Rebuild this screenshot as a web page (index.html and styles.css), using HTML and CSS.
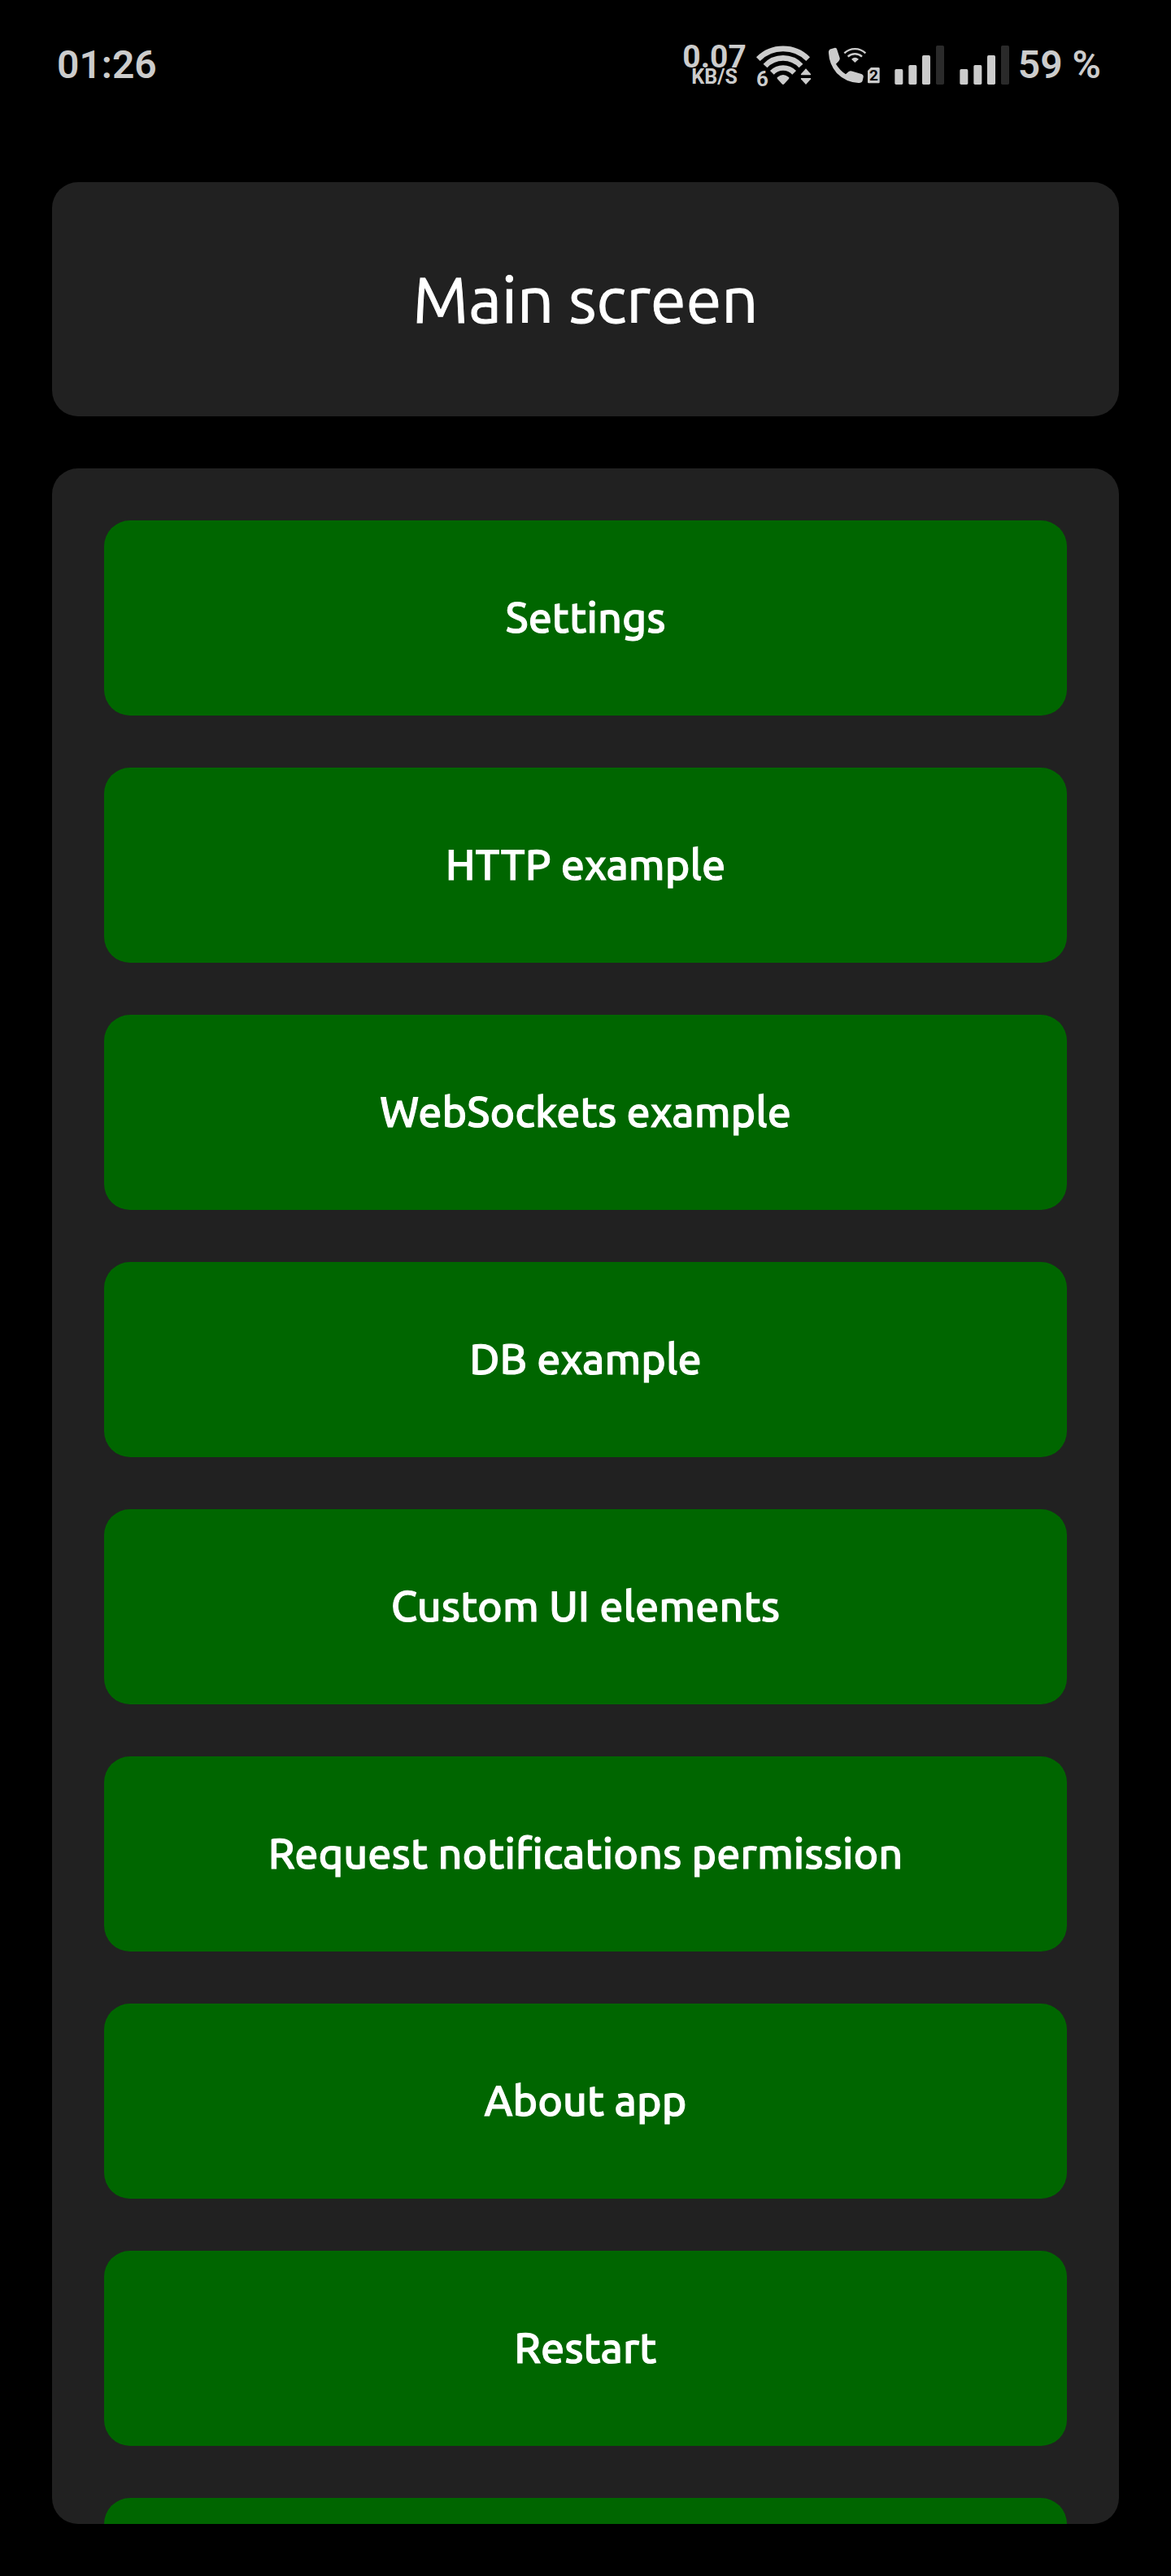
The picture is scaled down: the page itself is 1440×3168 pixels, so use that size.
FILE: index.html
```html
<!DOCTYPE html>
<html lang="en">
<head>
<meta charset="utf-8">
<meta name="viewport" content="width=device-width, initial-scale=1">
<title>Main screen</title>
<link rel="stylesheet" href="styles.css">
</head>
<body>
<div class="app">
  <div class="status-bar">
    <time class="status-text">01:26</time>
    <div class="status-icons">
      <div class="speed">
        <span class="speed-value">0.07</span>
        <span class="speed-unit">KB/S</span>
      </div>
      <svg class="icon icon-wifi" viewBox="321 66 240 168" role="img" aria-label="Wi-Fi 6">
        <g fill="none" stroke="currentColor" stroke-width="20">
          <path d="M340 128A130 130 0 0 1 524 128"/>
          <path d="M366 153A90 90 0 0 1 498 153"/>
          <path d="M391 178A57 57 0 0 1 473 178"/>
        </g>
        <path d="M411 201Q407 197 412 194Q432 178 452 194Q457 197 453 201L436 220Q432 224 428 220Z"/>
        <path d="M516 163L534 183Q536 187 532 187H500Q496 187 498 183Z"/>
        <path d="M516 222L534 202Q536 198 532 198H500Q496 198 498 202Z"/>
        <text x="333" y="227" font-size="78">6</text>
      </svg>
      <svg class="icon icon-call" viewBox="585 66 210 168" role="img" aria-label="Wi-Fi calling, SIM 2">
        <path d="M600 106Q598 92 611 90L621 87Q629 85 631 93L641 124Q643 131 637 136L627 146Q640 168 663 184L674 174Q680 170 688 173L721 183Q730 187 728 195L725 208Q722 217 710 216Q664 214 630 180Q602 148 600 106Z"/>
        <g fill="none" stroke="currentColor" stroke-width="7">
          <path d="M658 106A56 56 0 0 1 736 106"/>
          <path d="M671 119A38 38 0 0 1 723 119"/>
        </g>
        <path d="M684 128Q697 117 711 128L697 141Z"/>
        <path d="M756 159H784Q788 159 788 163V213Q788 217 784 217H748Q744 217 744 213V171Z"/>
        <text class="sim-number" x="766" y="208" font-size="57" text-anchor="middle">2</text>
      </svg>
      <svg class="icon icon-signal" viewBox="39 66 216 168" role="img" aria-label="SIM 1 signal">
        <rect x="64" y="165" width="30" height="57" rx="5"/>
        <rect x="115" y="150" width="30" height="72" rx="5"/>
        <rect x="165" y="114" width="30" height="108" rx="5"/>
        <rect class="signal-off" x="216" y="78" width="30" height="144" rx="5"/>
      </svg>
      <svg class="icon icon-signal" viewBox="39 66 216 168" role="img" aria-label="SIM 2 signal">
        <rect x="64" y="165" width="30" height="57" rx="5"/>
        <rect x="115" y="150" width="30" height="72" rx="5"/>
        <rect x="165" y="114" width="30" height="108" rx="5"/>
        <rect class="signal-off" x="216" y="78" width="30" height="144" rx="5"/>
      </svg>
      <span class="status-text">59 %</span>
    </div>
  </div>
  <header class="card title-card">
    <h1 class="title">Main screen</h1>
  </header>
  <main class="card menu">
    <button class="menu-button" type="button">Settings</button>
    <button class="menu-button" type="button">HTTP example</button>
    <button class="menu-button" type="button">WebSockets example</button>
    <button class="menu-button" type="button">DB example</button>
    <button class="menu-button" type="button">Custom UI elements</button>
    <button class="menu-button" type="button">Request notifications permission</button>
    <button class="menu-button" type="button">About app</button>
    <button class="menu-button" type="button">Restart</button>
    <button class="menu-button" type="button" aria-label="Exit"></button>
  </main>
</div>
</body>
</html>
```
FILE: styles.css
```css
* {
  box-sizing: border-box;
}

body {
  margin: 0;
  background: #000;
  color: #fff;
  font-family: Ubuntu, "Noto Sans", sans-serif;
}

.app {
  display: flex;
  flex-direction: column;
  gap: 64px;
  height: 100vh;
  padding: 0 64px 64px;
}

.status-bar {
  display: flex;
  flex: none;
  align-items: center;
  justify-content: space-between;
  height: 160px;
  padding: 0 22px 0 6px;
  color: #ccc;
  font-family: Roboto, sans-serif;
}

.status-text {
  font-size: 48px;
  font-weight: 600;
  line-height: 56px;
}

.status-icons {
  display: flex;
  align-items: center;
  gap: 8px;
}

.speed {
  display: flex;
  flex-direction: column;
  align-items: center;
  font-weight: 700;
}

.speed-value {
  font-size: 39px;
  line-height: 30px;
}

.speed-unit {
  font-size: 25px;
  line-height: 20px;
}

.icon {
  flex: none;
  height: 56px;
  overflow: visible;
  fill: currentColor;
  font-weight: 700;
}

.icon-wifi {
  width: 80px;
}

.icon-call {
  width: 70px;
}

.icon-signal {
  width: 72px;
}

.signal-off {
  fill: #2a2a2a;
}

.sim-number {
  fill: #000;
}

.card {
  border-radius: 32px;
  background: #212121;
}

.title-card {
  flex: none;
  padding: 88px 64px;
  text-align: center;
}

.title {
  margin: 0;
  font-size: 79px;
  font-weight: 400;
  line-height: 112px;
  -webkit-text-stroke: 1px currentColor;
}

.menu {
  display: flex;
  flex: 1;
  flex-direction: column;
  gap: 64px;
  min-height: 0;
  padding: 64px;
  overflow-y: auto;
  scrollbar-width: none;
}

.menu-button {
  flex: none;
  height: 240px;
  padding: 0 24px 2px;
  border: 0;
  border-radius: 32px;
  background: #006600;
  color: #fff;
  font-family: inherit;
  font-size: 52px;
  font-weight: 500;
  -webkit-text-stroke: 1px currentColor;
  cursor: pointer;
}
```
